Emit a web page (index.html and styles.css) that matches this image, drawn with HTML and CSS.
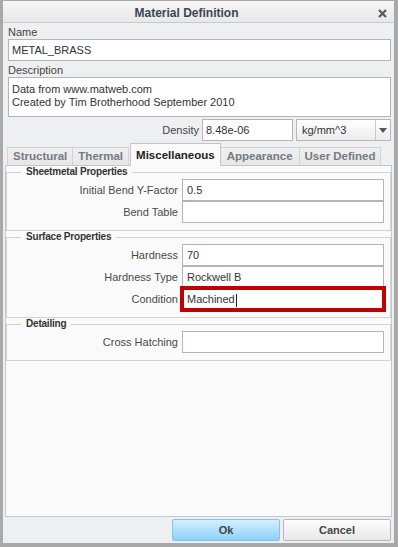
FILE: index.html
```html
<!DOCTYPE html>
<html lang="en">
<head>
  <meta charset="UTF-8" />
  <title>Material Definition</title>
  <link rel="stylesheet" href="styles.css">
</head>
<body>
  <div class="dialog">
    <div class="titlebar">
      <span class="title">Material Definition</span>
      <svg class="close" width="9" height="9" viewBox="0 0 9 9">
        <path d="M1 1L8 8M8 1L1 8" stroke="#5a5a5a" stroke-width="2.2" />
      </svg>
    </div>

    <div class="content">
      <div class="top-fields">
        <div class="caption">Name</div>
        <div class="input">METAL_BRASS</div>
        <div class="caption caption-gap">Description</div>
        <div class="textarea">Data from www.matweb.com<br>Created by Tim Brotherhood September 2010</div>

        <div class="density">
          <span>Density</span>
          <div class="input density-value">8.48e-06</div>
          <div class="select">
            <span class="select-text">kg/mm^3</span>
            <span class="select-arrow"><span class="triangle"></span></span>
          </div>
        </div>
      </div>

      <div class="tabs">
        <div class="tab">Structural</div>
        <div class="tab">Thermal</div>
        <div class="tab active">Miscellaneous</div>
        <div class="tab">Appearance</div>
        <div class="tab">User Defined</div>
      </div>

      <div class="panel">
        <fieldset class="group">
          <legend>Sheetmetal Properties</legend>
          <div class="row"><span class="row-label">Initial Bend Y-Factor</span><div class="input">0.5</div></div>
          <div class="row"><span class="row-label">Bend Table</span><div class="input"></div></div>
        </fieldset>

        <fieldset class="group">
          <legend>Surface Properties</legend>
          <div class="row"><span class="row-label">Hardness</span><div class="input">70</div></div>
          <div class="row"><span class="row-label">Hardness Type</span><div class="input">Rockwell B</div></div>
          <div class="row"><span class="row-label">Condition</span><div class="input highlight">Machined<span class="caret"></span></div></div>
        </fieldset>

        <fieldset class="group">
          <legend>Detailing</legend>
          <div class="row"><span class="row-label">Cross Hatching</span><div class="input"></div></div>
        </fieldset>
      </div>

      <div class="footer">
        <button class="btn btn-ok">Ok</button>
        <button class="btn">Cancel</button>
      </div>
    </div>
  </div>
</body>
</html>
```

FILE: styles.css
```css
body {
  margin: 0;
  font-family: "Liberation Sans", Arial, sans-serif;
  font-size: 11px;
  color: #444;
}

.dialog {
  width: 398px;
  height: 547px;
  box-sizing: border-box;
  border: 3px solid #a9a9a9;
  border-top-width: 1px;
  border-right-width: 4px;
  border-bottom-width: 4px;
  background: #eeeff1;
  display: flex;
  flex-direction: column;
}

.titlebar {
  height: 22px;
  box-sizing: border-box;
  padding-top: 3px;
  border-bottom: 1px solid #c9c9c9;
  background: linear-gradient(#f6f6f6, #e8e8e8);
  display: flex;
  align-items: center;
}

.title {
  flex: 1;
  text-align: center;
  font-size: 12px;
  font-weight: bold;
  color: #3c4656;
}

.close {
  margin: 0 7px 0 8px;
}

.content {
  flex: 1;
  display: flex;
  flex-direction: column;
  padding: 0 2px;
}

.top-fields {
  margin: 0 1px 0 3px;
  padding-top: 3px;
}

.caption {
  line-height: 13px;
  color: #444;
}

.caption-gap {
  margin-top: 3px;
}

.input {
  height: 22px;
  box-sizing: border-box;
  border: 1px solid #b4b4b4;
  background: #fff;
  padding: 0 3px;
  line-height: 20px;
  color: #333;
  white-space: nowrap;
}

.textarea {
  height: 40px;
  box-sizing: border-box;
  border: 1px solid #b4b4b4;
  background: #fff;
  padding: 5px 3px 0;
  line-height: 13px;
  color: #333;
}

.density {
  margin-top: 2px;
  display: flex;
  justify-content: flex-end;
  align-items: center;
  gap: 3px;
}

.density-value {
  width: 91px;
}

.select {
  width: 95px;
  height: 22px;
  box-sizing: border-box;
  border: 1px solid #b8b8b8;
  background: linear-gradient(#ffffff, #ececec);
  display: flex;
  color: #333;
}

.select-text {
  flex: 1;
  padding-left: 5px;
  line-height: 20px;
}

.select-arrow {
  width: 14px;
  border-left: 1px solid #c8c8c8;
  display: flex;
  align-items: center;
  justify-content: center;
}

.triangle {
  border-left: 4px solid transparent;
  border-right: 4px solid transparent;
  border-top: 5px solid #555;
}

.tabs {
  margin: 2px 0 0 2px;
  height: 22px;
  display: flex;
  align-items: flex-end;
}

.tab {
  height: 18px;
  box-sizing: border-box;
  padding: 0 5px;
  border: 1px solid #d3d3d3;
  border-bottom: none;
  background: linear-gradient(#f0f0f0, #e6e6e6);
  font-size: 11.5px;
  font-weight: bold;
  line-height: 17px;
  color: #737b84;
}

.tab + .tab {
  margin-left: -1px;
}

.tab.active {
  position: relative;
  z-index: 1;
  height: 23px;
  margin: 0 0 -1px 1px;
  padding: 0 5px;
  border-color: #c3c5c8;
  background: #fafafa;
  line-height: 22px;
  color: #222;
}

.tab.active + .tab {
  padding: 0 6px;
}

.panel {
  flex: 1;
  border: 1px solid #c5c8cb;
  background: #fafafa;
}

.group {
  margin: 0;
  padding: 1px 6px 7px 0;
  border: 1px solid #d2d2d2;
  min-width: 0;
}

.group legend {
  margin-left: 14px;
  padding: 0 5px;
  font-size: 10px;
  font-weight: bold;
  letter-spacing: -0.2px;
  line-height: 12px;
  color: #333;
}

.row {
  display: grid;
  grid-template-columns: 171px 1fr;
  column-gap: 4px;
}

.row-label {
  text-align: right;
  line-height: 22px;
  color: #4a4a4a;
  white-space: nowrap;
}

.row .input {
  padding: 0 4px;
}

.row .input.highlight {
  border: 2px solid #c00000;
  outline: 2px solid #c00000;
  padding: 0 3px;
  line-height: 18px;
}

.caret {
  display: inline-block;
  width: 1px;
  height: 13px;
  margin-left: 1px;
  background: #222;
  vertical-align: middle;
}

.footer {
  padding: 2px 1px 2px 0;
  display: flex;
  justify-content: flex-end;
  gap: 3px;
}

.btn {
  width: 108px;
  height: 22px;
  border: 1px solid #b7b7b7;
  border-radius: 2px;
  background: linear-gradient(#fdfdfd, #e8e8e8);
  font-family: "Liberation Sans", Arial, sans-serif;
  font-size: 11px;
  font-weight: bold;
  color: #444;
  padding: 0;
}

.btn-ok {
  border-color: #80c3ec;
  background: linear-gradient(#d6eefd, #8dd0f8);
}
```
